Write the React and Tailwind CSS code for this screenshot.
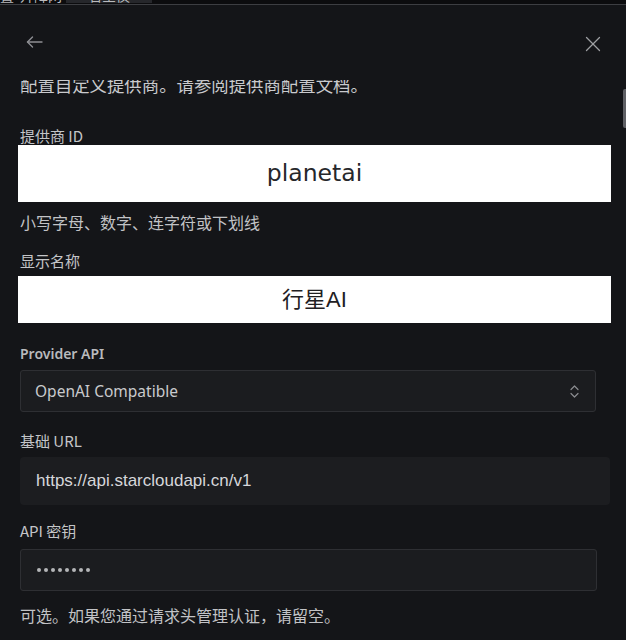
import React from "react";

const cjk = { fontFamily: '"Noto Sans CJK SC", "Noto Sans", sans-serif' };
const latin = { fontFamily: '"Noto Sans", "Noto Sans CJK SC", sans-serif' };
const arial = { fontFamily: '"Liberation Sans", "Noto Sans CJK SC", sans-serif' };

function BackArrow() {
  return (
    <svg width="17" height="12" viewBox="0 0 17 12" fill="none" stroke="#8e8f93" strokeWidth="1.4" strokeLinecap="round" strokeLinejoin="round">
      <path d="M16 6H1.5" />
      <path d="M6.5 1 1.5 6l5 5" />
    </svg>
  );
}

function CloseIcon() {
  return (
    <svg width="16" height="16" viewBox="0 0 16 16" fill="none" stroke="#9d9ea2" strokeWidth="1.3" strokeLinecap="round">
      <path d="M1.5 1.5 14.5 14.5" />
      <path d="M14.5 1.5 1.5 14.5" />
    </svg>
  );
}

function UpDown() {
  return (
    <svg width="11" height="15" viewBox="0 0 11 15" fill="none" stroke="#8b8c90" strokeWidth="1.2" strokeLinecap="round" strokeLinejoin="round">
      <path d="M2 5.5 5.5 2 9 5.5" />
      <path d="M2 9.5 5.5 13 9 9.5" />
    </svg>
  );
}

function Label({ children, className = "" }) {
  return (
    <div className={`ml-[20px] text-[15px] leading-[18px] text-[#c4c5c8] ${className}`} style={cjk}>
      {children}
    </div>
  );
}

export default function App() {
  return (
    <div className="relative flex h-[640px] w-[626px] flex-col overflow-hidden bg-[#141518]">
      {/* window strip behind the panel */}
      <div className="relative h-[5px] shrink-0 overflow-hidden border-b border-[#3d3e42] bg-[#0c0c0e]">
        <div className="absolute left-0 top-[-13px] flex items-center text-[14px] leading-[16px] text-[#b9babd]" style={cjk}>
          <span>置</span>
          <span className="ml-[6px]">升降网</span>
          <span className="ml-[4px] bg-[#26272b] px-[22px]">名空仪</span>
        </div>
      </div>

      {/* panel header */}
      <div className="flex h-[75px] shrink-0 items-start justify-between pl-[26px] pr-[25px]">
        <div className="mt-[31px]">
          <BackArrow />
        </div>
        <div className="mt-[31px]">
          <CloseIcon />
        </div>
      </div>

      {/* scrolled form body */}
      <div className="relative flex-1 overflow-hidden">
        <div className="mt-[-6px] ml-[20px] text-[17.4px] leading-[22px] text-[#c9cacd]" style={cjk}>
          配置自定义提供商。请参阅提供商配置文档。
        </div>

        <Label className="mt-[31px]">提供商 ID</Label>
        <div className="ml-[18px] flex h-[57px] w-[593px] items-center justify-center bg-white">
          <span className="text-[23.5px] text-[#26272b]" style={{ fontFamily: '"DejaVu Sans", sans-serif' }}>
            planetai
          </span>
        </div>
        <div className="ml-[20px] mt-[9px] text-[16px] leading-[22px] text-[#c2c3c6]" style={cjk}>
          小写字母、数字、连字符或下划线
        </div>

        <Label className="mt-[19px]">显示名称</Label>
        <div className="ml-[18px] mt-[6px] flex h-[47px] w-[593px] items-center justify-center bg-white">
          <span className="text-[22px] text-[#1f2023]" style={arial}>
            行星AI
          </span>
        </div>

        <div className="ml-[20px] mt-[21px] text-[14px] font-semibold leading-[20px] text-[#b9babd]" style={latin}>
          Provider API
        </div>
        <div className="ml-[20px] mt-[6px] flex h-[42px] w-[576px] items-center justify-between rounded-[3px] border border-[#2e2f33] bg-[#1b1c1f] pl-[14px] pr-[15px]">
          <span className="mt-[2px] text-[15.5px] text-[#c9cacd]" style={latin}>
            OpenAI Compatible
          </span>
          <UpDown />
        </div>

        <Label className="mt-[20px]">基础 URL</Label>
        <div className="ml-[20px] mt-[7px] flex h-[48px] w-[590px] items-center rounded-[4px] bg-[#1c1d20] pl-[16px]">
          <span className="text-[17px] text-[#d6d7da]" style={arial}>
            https://api.starcloudapi.cn/v1
          </span>
        </div>

        <Label className="mt-[17px]">API 密钥</Label>
        <div className="ml-[20px] mt-[9px] flex h-[42px] w-[577px] items-center gap-[3px] rounded-[3px] border border-[#2e2f33] bg-[#1b1c1f] pl-[16px]">
          {[0, 1, 2, 3, 4, 5, 6, 7].map((i) => (
            <span key={i} className="h-[4px] w-[4px] rounded-full bg-[#b4b5b8]" />
          ))}
        </div>
        <div className="ml-[20px] mt-[13px] text-[16px] leading-[22px] text-[#c2c3c6]" style={cjk}>
          可选。如果您通过请求头管理认证，请留空。
        </div>
      </div>

      {/* scrollbar thumb */}
      <div className="absolute right-0 top-[89px] h-[39px] w-[3px] rounded-l-[2px] bg-[#5f6065]" />
    </div>
  );
}
